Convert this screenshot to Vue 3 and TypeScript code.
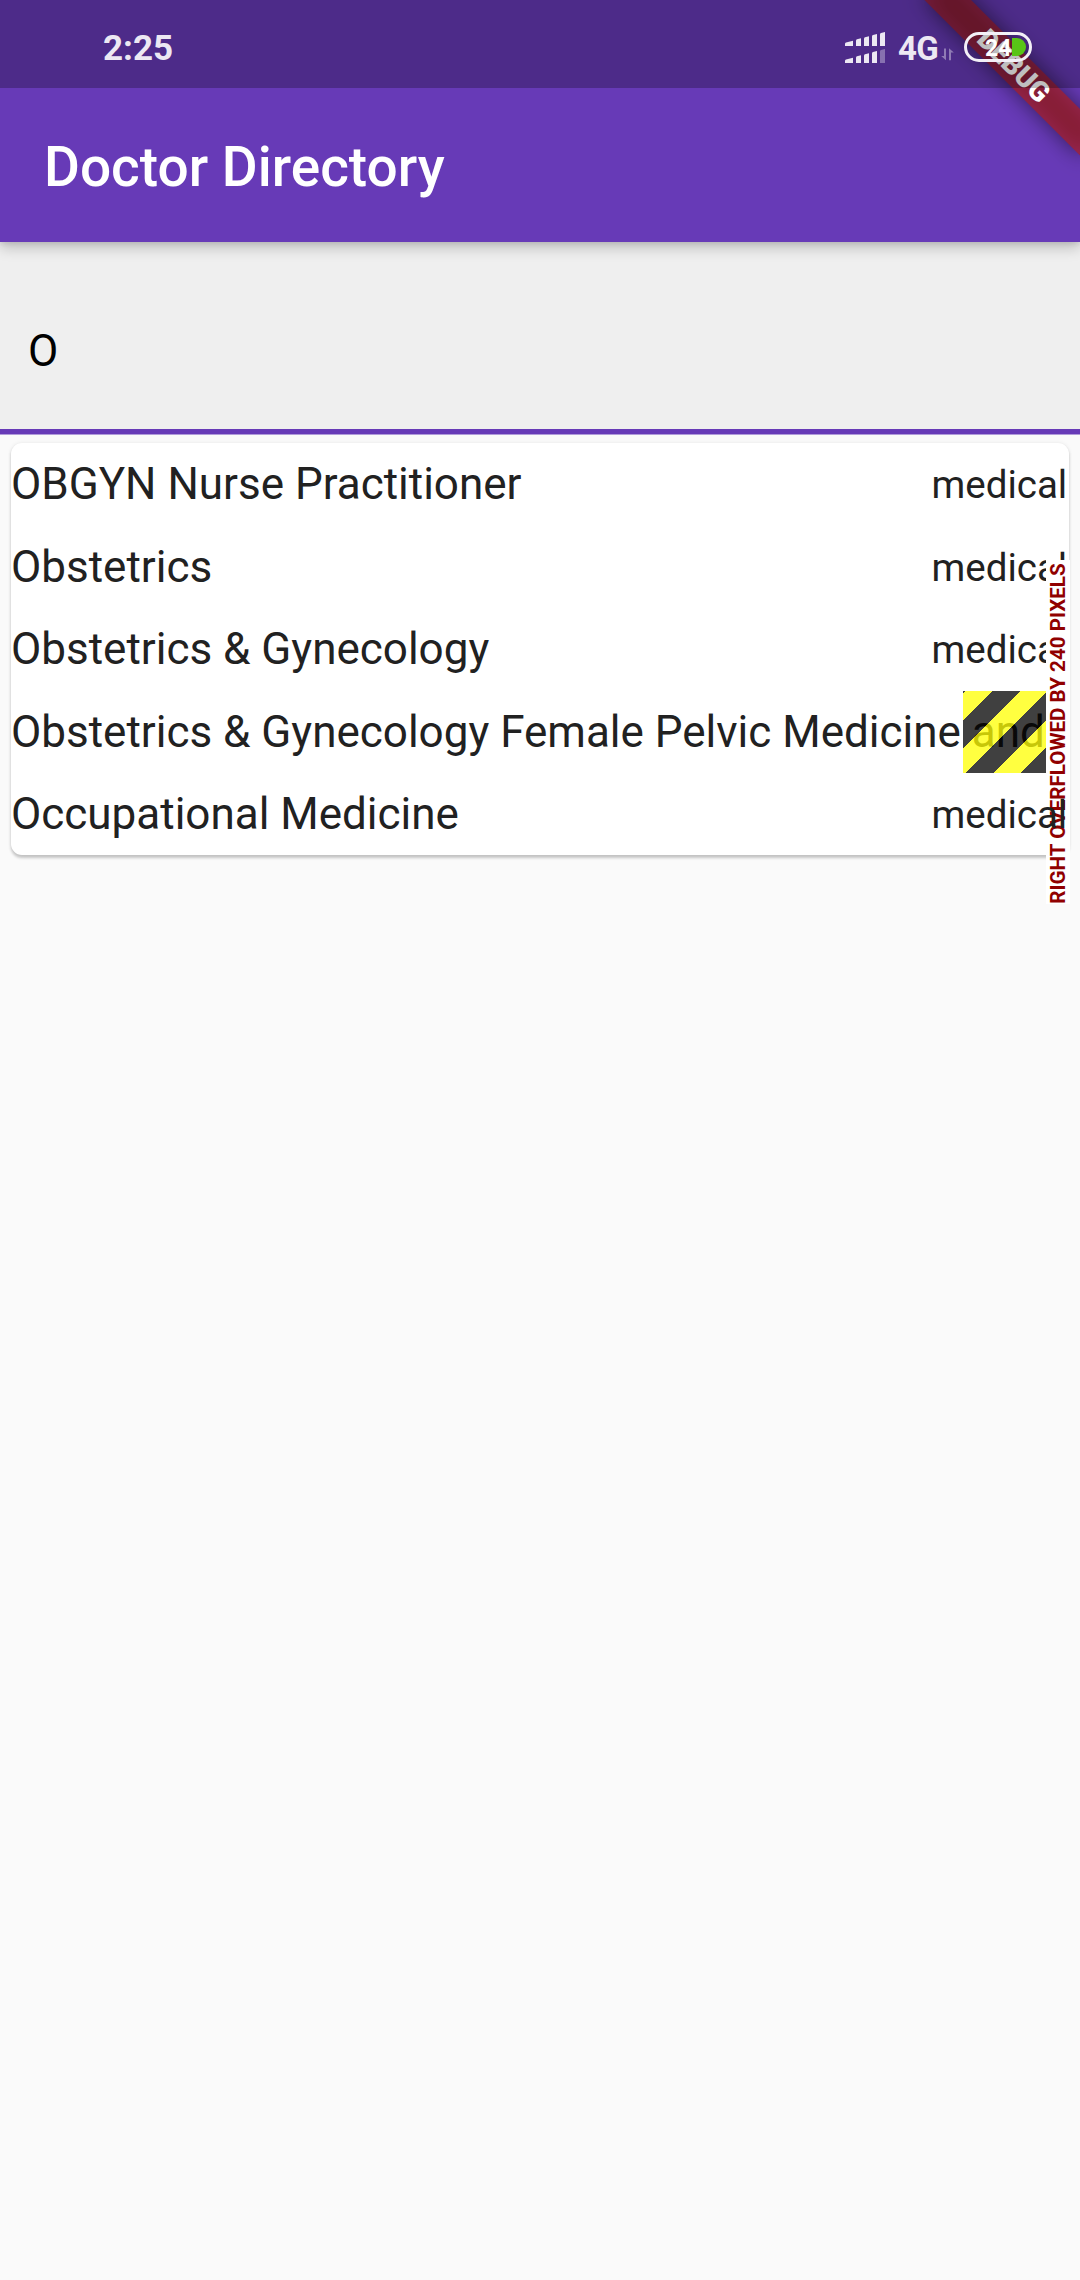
<script setup lang="ts">
import { ref } from 'vue'

interface Specialty {
  name: string
  kind: string
  overflow?: string
}

const query = ref('O')
const specialties: Specialty[] = [
  { name: 'OBGYN Nurse Practitioner', kind: 'medical' },
  { name: 'Obstetrics', kind: 'medical' },
  { name: 'Obstetrics & Gynecology', kind: 'medical' },
  {
    name: 'Obstetrics & Gynecology Female Pelvic Medicine and',
    kind: '',
    overflow: 'RIGHT OVERFLOWED BY 240 PIXELS',
  },
  { name: 'Occupational Medicine', kind: 'medical' },
]
</script>

<template>
  <div class="screen">
    <header class="app-bar">
      <h1 class="title">Doctor Directory</h1>
    </header>

    <main class="content">
      <div class="field">
        <input v-model="query" class="field-input" type="text" />
      </div>
      <div class="card">
        <div v-for="item in specialties" :key="item.name" class="row">
          <span class="name">{{ item.name }}</span>
          <span v-if="item.kind" class="kind">{{ item.kind }}</span>
          <template v-if="item.overflow">
            <span class="stripes"></span>
            <span class="overflow-label"><span class="overflow-text">{{ item.overflow }}</span></span>
          </template>
        </div>
      </div>
    </main>

    <div class="banner-clip">
      <div class="banner"><span>DEBUG</span></div>
    </div>

    <div class="status-bar">
      <span class="time">2:25</span>
      <div class="indicators">
        <svg class="signal" width="41" height="32" viewBox="0 0 41 32" fill="#ece8f3">
          <path d="M0 14V11.8Q0 10.8 1 10.5L8 8.7V14Z" />
          <path d="M11 14V8.5Q11 7.5 12 7.2L16 6.2V14Z" />
          <path d="M19 14V6.5Q19 5.5 20 5.2L24 4.3V14Z" />
          <path d="M27 14V4.3Q27 3.3 28 3L32 2V14Z" />
          <path d="M35 14V2.3Q35 1.3 36 1L40 0V14Z" />
          <path d="M0 31V28.8Q0 27.8 1 27.5L8 25.7V31Z" />
          <path d="M11 31V25.5Q11 24.5 12 24.2L16 23.2V31Z" />
          <path d="M19 31V23.5Q19 22.5 20 22.2L24 21.3V31Z" />
          <path d="M27 31V21.3Q27 20.3 28 20L32 19V31Z" />
          <path d="M35 31V19.3Q35 18.3 36 18L40 17V31Z" opacity="0.37" />
        </svg>
        <span class="network">4G</span>
        <svg class="arrows" width="13" height="13" viewBox="0 0 13 13" fill="#ece8f3" opacity="0.42">
          <path d="M3 0.5H5V12.2L0.2 8H3Z" />
          <path d="M8 12.2V0.2L12.8 4.6H10V12.2Z" />
        </svg>
        <div class="battery">
          <svg width="68" height="30" viewBox="0 0 68 30">
            <path d="M48 6H53A9 9 0 0 1 53 24H48Z" fill="#58c516" />
            <rect x="1.5" y="1.5" width="65" height="27" rx="13.5" fill="none" stroke="#f3f0f7" stroke-width="3" />
          </svg>
          <span class="level">24</span>
        </div>
      </div>
    </div>
  </div>
</template>

<style>
body {
  margin: 0;
  background: #fafafa;
}
</style>

<style scoped>
.screen {
  position: relative;
  width: 1080px;
  height: 2280px;
  overflow: hidden;
  background: #fafafa;
  font-family: Roboto, sans-serif;
  display: flex;
  flex-direction: column;
}

.app-bar {
  position: relative;
  z-index: 1;
  flex: none;
  box-sizing: border-box;
  height: 242px;
  padding: 88px 44px 0;
  display: flex;
  align-items: center;
  background: #673ab7;
  box-shadow: 0 6px 13px rgba(0, 0, 0, 0.2), 0 2px 5px rgba(0, 0, 0, 0.08);
}

.title {
  margin: 4px 0 0;
  color: #fff;
  font-size: 55px;
  font-weight: 500;
  line-height: 64px;
}

.content {
  display: flex;
  flex-direction: column;
}

.field {
  box-sizing: border-box;
  height: 193px;
  padding: 25px 28px 0;
  display: flex;
  align-items: center;
  background: linear-gradient(
    #efefef 187px,
    #673ab7 187px 192px,
    #b09bda 192px
  );
}

.field-input {
  width: 100%;
  height: 60px;
  padding: 0;
  border: 0;
  outline: 0;
  background: transparent;
  color: #000;
  font: 400 44px Roboto, sans-serif;
}

.card {
  height: 412px;
  margin: 8px 11px 11px;
  border-radius: 11px;
  background: #fff;
  box-shadow: 0 2.5px 3px rgba(0, 0, 0, 0.2), 0 0 4px rgba(0, 0, 0, 0.07);
}

.row {
  position: relative;
  height: 82.5px;
  display: flex;
  align-items: center;
  justify-content: space-between;
  color: #212121;
  white-space: nowrap;
}

.name {
  font-size: 44px;
  line-height: 52px;
}

.kind {
  position: relative;
  padding: 1.5px 1.8px 0 0;
  font-size: 38.5px;
  line-height: 46px;
}

.stripes {
  position: absolute;
  top: 0;
  right: 0;
  width: 105.8px;
  height: 82.5px;
  background: repeating-linear-gradient(
    135deg,
    rgba(0, 0, 0, 0.75) 0 1.56px,
    rgba(255, 255, 0, 0.75) 1.56px 21px,
    rgba(0, 0, 0, 0.75) 21px 38.89px
  );
}

.overflow-label {
  position: absolute;
  top: 50%;
  right: -1px;
  width: 24px;
  height: 344px;
  transform: translateY(-50%);
  display: flex;
  align-items: center;
  justify-content: center;
  background: #fff;
}

.overflow-text {
  flex: none;
  transform: translateY(1.5px) rotate(-90deg);
  color: #900000;
  font-size: 20.625px;
  font-weight: 700;
  line-height: 24px;
}

.banner-clip {
  position: absolute;
  z-index: 2;
  top: 0;
  right: 0;
  width: 300px;
  height: 300px;
  overflow: hidden;
}

.banner {
  position: absolute;
  left: 190px;
  top: 77px;
  width: 220px;
  height: 33px;
  transform: rotate(45deg);
  transform-origin: 110px -77px;
  display: flex;
  align-items: center;
  justify-content: center;
  color: #fff;
  font-size: 28.05px;
  font-weight: 900;
  line-height: 28px;
}

.banner::before,
.banner::after {
  content: '';
  position: absolute;
  inset: 0;
}

.banner::before {
  z-index: -2;
  background: rgba(0, 0, 0, 0.5);
  filter: blur(10.9px);
}

.banner::after {
  z-index: -1;
  background: rgba(183, 28, 28, 0.627);
}

.status-bar {
  position: absolute;
  z-index: 3;
  top: 0;
  left: 0;
  box-sizing: border-box;
  width: 1080px;
  height: 88px;
  padding: 8px 48px 0 103px;
  display: flex;
  align-items: center;
  justify-content: space-between;
  background: rgba(0, 0, 0, 0.25);
  color: #ece8f3;
}

.time {
  padding-top: 2px;
  font-size: 35px;
  font-weight: 700;
  line-height: 42px;
}

.indicators {
  display: flex;
  align-items: center;
}

.signal {
  margin-right: 12px;
}

.network {
  width: 41px;
  padding-top: 1px;
  font-size: 33px;
  font-weight: 700;
  line-height: 40px;
  letter-spacing: -0.8px;
}

.arrows {
  margin: 12px 10px 0 2px;
}

.battery {
  position: relative;
  width: 68px;
  height: 30px;
  margin-bottom: 2px;
}

.battery svg {
  display: block;
}

.level {
  position: absolute;
  left: 21px;
  top: 3px;
  color: #fff;
  font-size: 23px;
  font-weight: 700;
  line-height: 27px;
}
</style>
